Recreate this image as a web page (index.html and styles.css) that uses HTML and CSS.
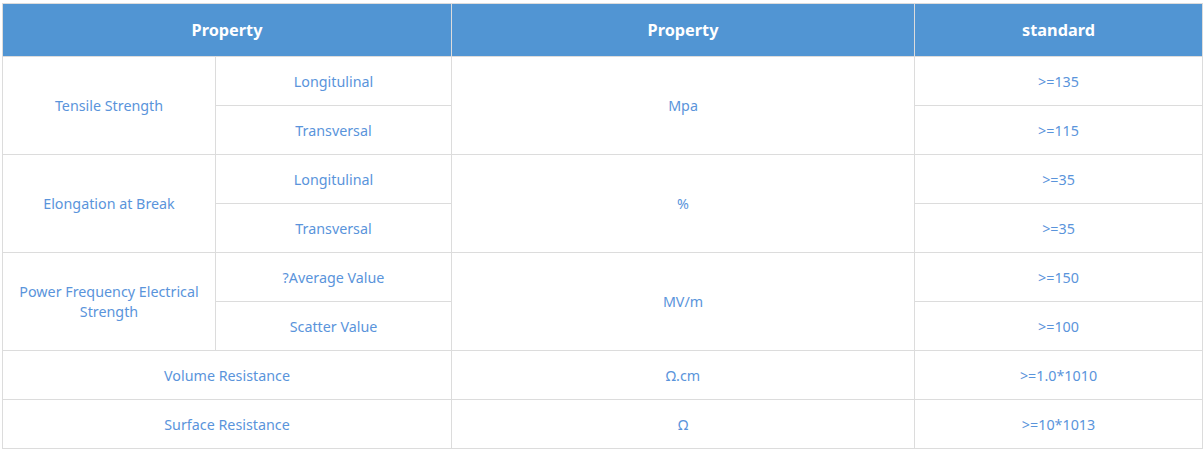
FILE: index.html
```html
<!DOCTYPE html>
<html>
<head>
<meta charset="utf-8">
<link rel="stylesheet" href="styles.css">
</head>
<body>
<table class="spec">
  <colgroup>
    <col class="c1"><col class="c2"><col class="c3"><col class="c4">
  </colgroup>
  <thead>
    <tr class="head">
      <th colspan="2">Property</th>
      <th>Property</th>
      <th>standard</th>
    </tr>
  </thead>
  <tbody>
    <tr><td rowspan="2">Tensile Strength</td><td>Longitulinal</td><td rowspan="2">Mpa</td><td>&gt;=135</td></tr>
    <tr><td>Transversal</td><td>&gt;=115</td></tr>
    <tr><td rowspan="2">Elongation at Break</td><td>Longitulinal</td><td rowspan="2">%</td><td>&gt;=35</td></tr>
    <tr><td>Transversal</td><td>&gt;=35</td></tr>
    <tr><td rowspan="2">Power Frequency Electrical Strength</td><td>?Average Value</td><td rowspan="2">MV/m</td><td>&gt;=150</td></tr>
    <tr><td>Scatter Value</td><td>&gt;=100</td></tr>
    <tr><td colspan="2">Volume Resistance</td><td>Ω.cm</td><td>&gt;=1.0*1010</td></tr>
    <tr><td colspan="2">Surface Resistance</td><td>Ω</td><td>&gt;=10*1013</td></tr>
  </tbody>
</table>
</body>
</html>
```
FILE: styles.css
```css
html, body {
  margin: 0;
  padding: 0;
  background: #ffffff;
}
body {
  padding: 3px 0 0 2px;
  font-family: "Noto Sans", "Open Sans", sans-serif;
}
.spec {
  width: 1200px;
  table-layout: fixed;
  border-collapse: collapse;
}
.c1 { width: 213px; }
.c2 { width: 236px; }
.c3 { width: 463px; }
.c4 { width: 288px; }
.spec th, .spec td {
  border: 1px solid #dcdcdc;
  text-align: center;
  vertical-align: middle;
  padding: 0 12px;
}
.head {
  height: 53px;
}
.head th {
  background: #5195d3;
  color: #ffffff;
  font-size: 16.3px;
  font-weight: bold;
}
.spec tbody tr {
  height: 49px;
}
.spec td {
  color: #5a94db;
  font-size: 14.3px;
  line-height: 20px;
  padding-top: 1px;
}
```
